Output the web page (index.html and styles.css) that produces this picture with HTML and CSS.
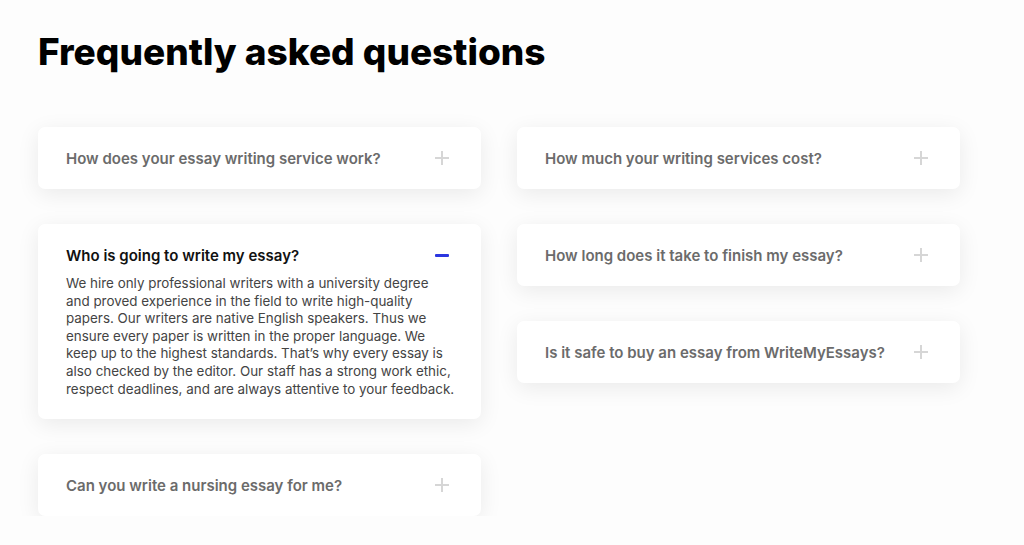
FILE: index.html
```html
<!DOCTYPE html>
<html lang="en">

<head>
  <meta charset="UTF-8">
  <meta name="viewport" content="width=device-width, initial-scale=1.0">
  <title>FAQ</title>
  <link rel="stylesheet" href="styles.css">
</head>

<body>
  <div class="faq">
    <h1>Frequently asked questions</h1>

    <div class="columns">
      <!-- Left column -->
      <div class="column">
        <div class="item">
          <div class="question">
            <span>How does your essay writing service work?</span>
            <span class="plus"></span>
          </div>
        </div>
        <div class="item open">
          <div class="question">
            <span>Who is going to write my essay?</span>
            <span class="minus"></span>
          </div>
          <p class="answer">We hire only professional writers with a university degree and proved experience in the field to write high-quality papers. Our writers are native English speakers. Thus we ensure every paper is written in the proper language. We keep up to the highest standards. That’s why every essay is also checked by the editor. Our staff has a strong work ethic, respect deadlines, and are always attentive to your feedback.</p>
        </div>
        <div class="item">
          <div class="question">
            <span>Can you write a nursing essay for me?</span>
            <span class="plus"></span>
          </div>
        </div>
      </div>

      <!-- Right column -->
      <div class="column">
        <div class="item">
          <div class="question">
            <span>How much your writing services cost?</span>
            <span class="plus"></span>
          </div>
        </div>
        <div class="item">
          <div class="question">
            <span>How long does it take to finish my essay?</span>
            <span class="plus"></span>
          </div>
        </div>
        <div class="item">
          <div class="question">
            <span>Is it safe to buy an essay from WriteMyEssays?</span>
            <span class="plus"></span>
          </div>
        </div>
      </div>
    </div>
  </div>
</body>

</html>
```

FILE: styles.css
```css
body {
  font-family: 'Inter', 'Noto Sans', sans-serif;
  background: #fdfdfd;
  margin: 0;
  padding: 0;
}

.faq {
  width: 922px;
  margin-left: 38px;
  padding-top: 30px;
}

h1 {
  font-size: 37px;
  font-weight: 800;
  line-height: 44px;
  color: #000;
  margin: 0 0 53px;
}

.columns {
  display: grid;
  grid-template-columns: 443px 443px;
  column-gap: 36px;
  align-items: start;
}

.column {
  display: flex;
  flex-direction: column;
  gap: 35px;
}

.item {
  background: #ffffff;
  border-radius: 7px;
  box-shadow: 0 5px 22px rgba(0, 0, 0, 0.08);
  padding: 21px 32px 21px 28px;
}

.question {
  display: flex;
  justify-content: space-between;
  align-items: center;
  height: 20px;
  font-size: 15px;
  font-weight: 600;
  color: #6b6b6b;
}

.item.open .question {
  color: #111;
}

.plus {
  width: 14px;
  height: 14px;
  position: relative;
}

.plus::before,
.plus::after {
  content: "";
  position: absolute;
  background: #d6d6d6;
}

.plus::before {
  left: 0;
  top: 6px;
  width: 14px;
  height: 1.5px;
}

.plus::after {
  left: 6.25px;
  top: 0;
  width: 1.5px;
  height: 14px;
}

.minus {
  width: 14px;
  height: 3px;
  background: #2b36e0;
  border-radius: 1px;
}

.answer {
  margin: 10px -6.5px 0 0;
  font-size: 13.4px;
  line-height: 17.6px;
  color: #444;
}
```
